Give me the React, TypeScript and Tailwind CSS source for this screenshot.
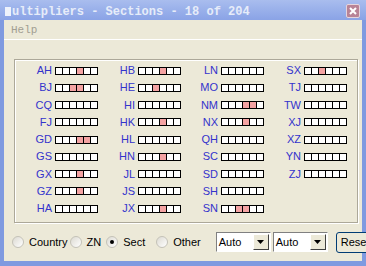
import React from "react"

const columns: [string, number[]][][] = [
  [["AH", [3]], ["BJ", [2, 3]], ["CQ", []], ["FJ", []], ["GD", [3, 4]], ["GS", []], ["GX", [3]], ["GZ", [3]], ["HA", []]],
  [["HB", [3]], ["HE", [2]], ["HI", []], ["HK", [3]], ["HL", []], ["HN", [3]], ["JL", []], ["JS", []], ["JX", [3]]],
  [["LN", []], ["MO", []], ["NM", [3, 4]], ["NX", [3]], ["QH", []], ["SC", []], ["SD", []], ["SH", []], ["SN", [2, 3]]],
  [["SX", [2]], ["TJ", []], ["TW", []], ["XJ", []], ["XZ", []], ["YN", []], ["ZJ", []]],
]

const Cells = ({ hits }: { hits: number[] }) => (
  <div className="flex border-l border-black">
    {[0, 1, 2, 3, 4, 5].map((i) => (
      <div
        key={i}
        className={
          "w-[7px] h-[8px] border-y border-r border-black " +
          (hits.includes(i) ? "bg-[#f4a3a3]" : "bg-white")
        }
      />
    ))}
  </div>
)

const Radio = ({ label, checked }: { label: string; checked?: boolean }) => (
  <div className="flex items-center">
    <div className="w-[12px] h-[12px] rounded-full border border-[#c4c2b8] bg-gradient-to-br from-[#dcdad2] to-white flex items-center justify-center">
      {checked && <div className="w-[4px] h-[4px] rounded-full bg-black" />}
    </div>
    <span className="ml-[5px]">{label}</span>
  </div>
)

const Combo = () => (
  <div className="w-[55px] h-[20px] bg-white border border-t-[#808080] border-l-[#808080] border-r-white border-b-white flex items-center">
    <span className="flex-1 pl-[2px] text-black">Auto</span>
    <div className="w-[16px] h-[16px] mr-[1px] bg-[#ece9d8] border border-t-white border-l-white border-r-[#404040] border-b-[#404040] flex items-center justify-center">
      <svg width="7" height="4" viewBox="0 0 7 4">
        <path d="M0 0h7L3.5 4z" fill="#000" />
      </svg>
    </div>
  </div>
)

export default function App() {
  return (
    <div className="w-[366px] h-[266px] flex flex-col bg-[#7f9ae0] overflow-hidden">
      <div className="h-[20px] shrink-0 flex items-center bg-gradient-to-b from-[#a9bdee] to-[#8aa3e6] pl-[5px] pr-[6px]">
        <div className="w-[6px] h-[9px] bg-[#eef2fb] mt-[2px]" />
        <span className="ml-[1px] mt-[3px] text-[12px] font-bold text-[#e6ecf9] whitespace-nowrap" style={{ fontFamily: '"Liberation Mono", monospace' }}>
          ultipliers - Sections - 18 of 204
        </span>
        <div className="ml-auto mt-[1px] w-[14px] h-[14px] rounded-[2px] border border-[#e4d4dc] bg-[#b88396] flex items-center justify-center">
          <svg width="8" height="8" viewBox="0 0 8 8">
            <path d="M1 1l6 6M7 1l-6 6" stroke="#fff" strokeWidth="2" />
          </svg>
        </div>
      </div>
      <div className="flex-1 mx-[4px] mb-[5px] bg-[#ece9d8] flex flex-col" style={{ fontFamily: '"Liberation Sans", Arial, sans-serif' }}>
        <div className="h-[20px] shrink-0 flex items-center pl-[7px] border-b border-white">
          <span className="text-[11px] text-[#a19e92] mt-[1px]" style={{ fontFamily: '"Liberation Mono", monospace' }}>Help</span>
        </div>
        <div className="mt-[19px] ml-[10px] mr-[4px] h-[164px] border border-[#aca899] shadow-[inset_1px_1px_0_#fff,1px_1px_0_#fff] pl-[7px] pt-[2px] flex">
          {columns.map((col, ci) => (
            <div key={ci} className="w-[83px] flex flex-col">
              {col.map(([name, hits]) => (
                <div key={name} className="h-[17.25px] flex items-center">
                  <span className="w-[30px] text-right text-[11px] text-[#3333cc] leading-none">{name}</span>
                  <div className="ml-[3px]">
                    <Cells hits={hits} />
                  </div>
                </div>
              ))}
            </div>
          ))}
        </div>
        <div className="flex-1 flex items-center text-[11px] text-black pl-[8px]">
          <Radio label="Country" />
          <div className="ml-[2px]"><Radio label="ZN" /></div>
          <div className="ml-[5px]"><Radio label="Sect" checked /></div>
          <div className="ml-[11px]"><Radio label="Other" /></div>
          <div className="ml-[15px]"><Combo /></div>
          <div className="ml-[2px]"><Combo /></div>
          <div className="ml-[8px] w-[40px] h-[21px] bg-[#ece9d8] border border-[#003c74] rounded-[3px] flex items-center pl-[4px] shrink-0">
            <span>Reset</span>
          </div>
        </div>
      </div>
    </div>
  )
}
